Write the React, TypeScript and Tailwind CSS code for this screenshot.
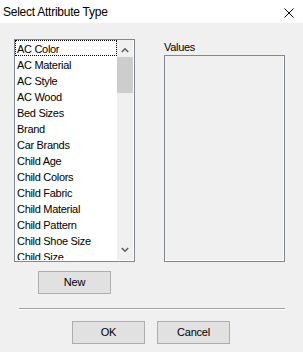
import React from "react";

const items = [
  "AC Color",
  "AC Material",
  "AC Style",
  "AC Wood",
  "Bed Sizes",
  "Brand",
  "Car Brands",
  "Child Age",
  "Child Colors",
  "Child Fabric",
  "Child Material",
  "Child Pattern",
  "Child Shoe Size",
  "Child Size",
];

function Btn({ label }: { label: string }) {
  return (
    <div className="w-[73px] h-[23px] bg-[#e1e1e1] border border-[#adadad] flex items-center justify-center text-[11px] tracking-[-0.2px] text-black">
      {label}
    </div>
  );
}

export default function App() {
  return (
    <div
      className="w-[303px] h-[352px] bg-[#f0f0f0] flex flex-col overflow-hidden text-black"
      style={{ fontFamily: '"Liberation Sans", Arial, sans-serif' }}
    >
      {/* Title bar */}
      <div className="h-[23px] bg-white flex items-center justify-between pl-[3px] pr-[9px] shrink-0">
        <span className="text-[12px] tracking-[-0.25px]">Select Attribute Type</span>
        <svg width="10" height="10" viewBox="0 0 10 10" className="mt-[2px]">
          <path d="M0.5 0.5 L9.5 9.5 M9.5 0.5 L0.5 9.5" stroke="#000" strokeWidth="1" fill="none" />
        </svg>
      </div>

      {/* Body */}
      <div className="flex pt-[16px] pl-[14px] gap-[29px]">
        {/* List box */}
        <div className="w-[121px] h-[223px] border border-[#828790] shrink-0">
          <div className="w-full h-full border-r border-b border-white flex">
            <div className="w-[102px] h-full bg-white overflow-hidden">
              {items.map((it, i) => (
                <div
                  key={it}
                  className={
                    "h-[16px] text-[11px] tracking-[-0.3px] whitespace-nowrap " +
                    (i === 0
                      ? "border border-dotted border-black pl-[1px] leading-[16px]"
                      : "pl-[2px] leading-[18px]")
                  }
                >
                  {it}
                </div>
              ))}
            </div>
            <div className="w-[16px] h-full bg-[#f0f0f0] flex flex-col">
              <div className="h-[17px] flex items-center justify-center">
                <svg width="8" height="6" viewBox="0 0 8 6" className="mt-[2px]">
                  <polyline points="0.8,5 4,1.8 7.2,5" stroke="#606060" strokeWidth="1.6" fill="none" />
                </svg>
              </div>
              <div className="h-[36px] bg-[#cdcdcd]" />
              <div className="flex-1" />
              <div className="h-[17px] flex items-center justify-center">
                <svg width="8" height="6" viewBox="0 0 8 6" className="mb-[3px]">
                  <polyline points="0.8,1 4,4.2 7.2,1" stroke="#606060" strokeWidth="1.6" fill="none" />
                </svg>
              </div>
            </div>
          </div>
        </div>

        {/* Values */}
        <div className="flex flex-col">
          <div className="h-[16px] text-[11px] leading-[16px] tracking-[-0.3px]">Values</div>
          <div className="w-[121px] h-[207px] border border-[#828790]">
            <div className="w-full h-full border-r border-b border-white" />
          </div>
        </div>
      </div>

      {/* New button */}
      <div className="pl-[38px] mt-[9px]">
        <Btn label="New" />
      </div>

      {/* Separator */}
      <div className="ml-[19px] w-[266px] mt-[14px] border-t border-[#a0a0a0] border-b border-b-white h-[2px]" />

      {/* OK / Cancel */}
      <div className="flex pl-[72px] gap-[12px] mt-[11px]">
        <Btn label="OK" />
        <Btn label="Cancel" />
      </div>
    </div>
  );
}
